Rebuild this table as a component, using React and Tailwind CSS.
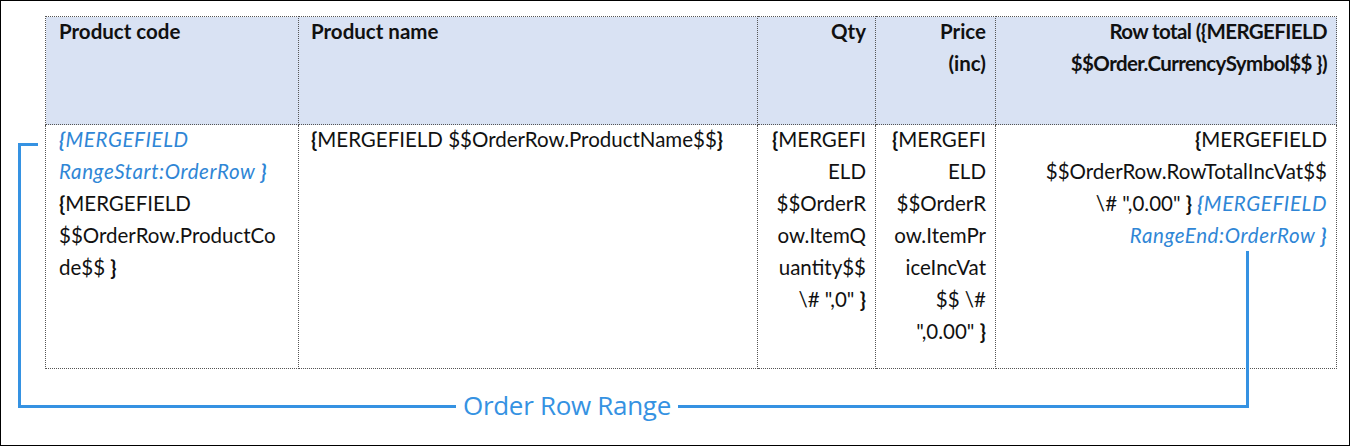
import React from "react";

const B = "text-[#2f86d6] italic tracking-[0.6px]";

const br = (c) => <span className="font-bold">{c}</span>;

function L({ children, className = "" }) {
  return <div className={"h-[32px] whitespace-nowrap " + className}>{children}</div>;
}

export default function App() {
  const cell = "border border-dotted border-[#555] align-top p-0";
  return (
    <div
      className="relative w-[1350px] h-[446px] bg-white border border-black overflow-hidden"
      style={{ fontFamily: "Lato, 'Open Sans', sans-serif" }}
    >
      <div className="pt-[15px] pl-[44px]">
        <table className="table-fixed border-collapse text-[20.5px] leading-[32px] text-[#111]">
          <colgroup>
            <col className="w-[253px]" />
            <col className="w-[459px]" />
            <col className="w-[118px]" />
            <col className="w-[120px]" />
            <col className="w-[341px]" />
          </colgroup>
          <tbody>
            <tr className="bg-[#d9e2f3] h-[108px] font-bold">
              <td className={cell + " pl-[13px]"}>
                <div className="-mt-[2px]">
                  <L>Product code</L>
                </div>
              </td>
              <td className={cell + " pl-[12px]"}>
                <div className="-mt-[2px]">
                  <L>Product name</L>
                </div>
              </td>
              <td className={cell + " pr-[9px] text-right"}>
                <div className="-mt-[2px]">
                  <L>Qty</L>
                </div>
              </td>
              <td className={cell + " pr-[9px] text-right"}>
                <div className="-mt-[2px]">
                  <L>Price</L>
                  <L>(inc)</L>
                </div>
              </td>
              <td className={cell + " pr-[9px] text-right"}>
                <div className="-mt-[2px] tracking-[-0.6px]">
                  <L>Row total ({"{"}MERGEFIELD</L>
                  <L>$$Order.CurrencySymbol$$ {"})"}</L>
                </div>
              </td>
            </tr>
            <tr className="h-[244px]">
              <td className={cell + " pl-[13px]"}>
                <div className="-mt-[2px]">
                  <L className={B}>{br("{")}MERGEFIELD</L>
                  <L className={B}>RangeStart:OrderRow {br("}")}</L>
                  <L>{br("{")}MERGEFIELD</L>
                  <L>$$OrderRow.ProductCo</L>
                  <L>de$$ {br("}")}</L>
                </div>
              </td>
              <td className={cell + " pl-[12px]"}>
                <div className="-mt-[2px]">
                  <L>
                    {br("{")}MERGEFIELD $$OrderRow.ProductName$${br("}")}
                  </L>
                </div>
              </td>
              <td className={cell + " pr-[9px] text-right"}>
                <div className="-mt-[2px]">
                  <L>{br("{")}MERGEFI</L>
                  <L>ELD</L>
                  <L>$$OrderR</L>
                  <L>ow.ItemQ</L>
                  <L>uantity$$</L>
                  <L>\# ",0" {br("}")}</L>
                </div>
              </td>
              <td className={cell + " pr-[9px] text-right"}>
                <div className="-mt-[2px]">
                  <L>{br("{")}MERGEFI</L>
                  <L>ELD</L>
                  <L>$$OrderR</L>
                  <L>ow.ItemPr</L>
                  <L>iceIncVat</L>
                  <L>$$ \#</L>
                  <L>",0.00" {br("}")}</L>
                </div>
              </td>
              <td className={cell + " pr-[9px] text-right"}>
                <div className="-mt-[2px]">
                  <L>{br("{")}MERGEFIELD</L>
                  <L>$$OrderRow.RowTotalIncVat$$</L>
                  <L>
                    \# ",0.00" {br("}")}{" "}
                    <span className={B}>{br("{")}MERGEFIELD</span>
                  </L>
                  <L className={B}>RangeEnd:OrderRow {br("}")}</L>
                </div>
              </td>
            </tr>
          </tbody>
        </table>
      </div>

      {/* range annotation bracket */}
      <div className="absolute left-[17px] top-[142px] w-[20px] h-[3px] bg-[#3592e2]" />
      <div className="absolute left-[17px] top-[142px] w-[3px] h-[265px] bg-[#3592e2]" />
      <div className="absolute left-[1245px] top-[250px] w-[3px] h-[157px] bg-[#3592e2]" />
      <div
        className="absolute left-[17px] top-[386px] w-[1231px] h-[36px] flex items-center"
        style={{ fontFamily: "'Open Sans', sans-serif" }}
      >
        <div className="w-[438px] h-[3px] bg-[#3592e2] mt-[2px]" />
        <div className="px-[7px] text-[26px] leading-[36px] tracking-[-0.3px] text-[#3592e2]">
          Order Row Range
        </div>
        <div className="flex-1 h-[3px] bg-[#3592e2] mt-[2px]" />
      </div>
    </div>
  );
}
